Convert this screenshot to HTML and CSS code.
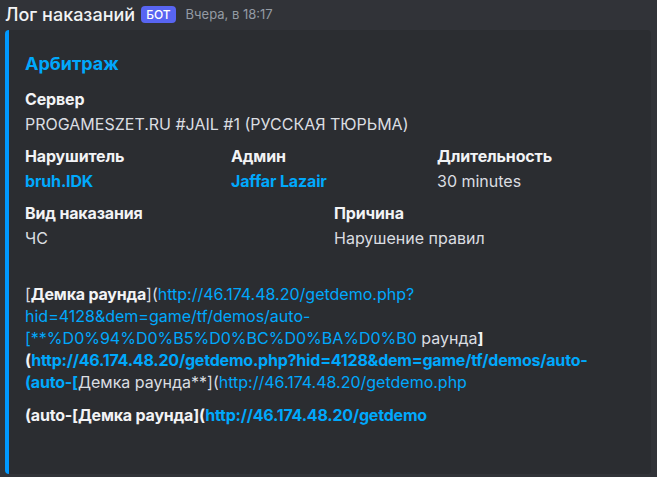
FILE: index.html
```html
<!DOCTYPE html>
<html lang="ru">
<head>
<meta charset="utf-8">
<title>Лог наказаний</title>
<link rel="stylesheet" href="styles.css">
</head>
<body>
<div class="message">
  <div class="header">
    <span class="username">Лог наказаний</span>
    <span class="bot-tag">БОТ</span>
    <span class="timestamp">Вчера, в 18:17</span>
  </div>
  <div class="embed">
    <div class="embed-title">Арбитраж</div>
    <div class="fields">
      <div class="field full">
        <div class="field-name">Сервер</div>
        <div class="field-value">PROGAMESZET.RU #JAIL #1 (РУССКАЯ ТЮРЬМА)</div>
      </div>
      <div class="field third">
        <div class="field-name">Нарушитель</div>
        <div class="field-value link bold">bruh.IDK</div>
      </div>
      <div class="field third">
        <div class="field-name">Админ</div>
        <div class="field-value link bold">Jaffar Lazair</div>
      </div>
      <div class="field third">
        <div class="field-name">Длительность</div>
        <div class="field-value">30 minutes</div>
      </div>
      <div class="field half">
        <div class="field-name">Вид наказания</div>
        <div class="field-value">ЧС</div>
      </div>
      <div class="field half">
        <div class="field-name">Причина</div>
        <div class="field-value">Нарушение правил</div>
      </div>
    </div>
    <div class="description">
      <p>[<b>Демка раунда</b>](<span class="link">http://46.174.48.20/getdemo.php?<br>hid=4128&amp;dem=game/tf/demos/auto-<br>[**%D0%94%D0%B5%D0%BC%D0%BA%D0%B0</span> раунда<b>]</b><br><b>(<span class="link">http://46.174.48.20/getdemo.php?hid=4128&amp;dem=game/tf/demos/auto-<br>(auto-[</span></b>Демка раунда**](<span class="link">http://46.174.48.20/getdemo.php</span></p>
      <p><b>(auto-[Демка раунда](<span class="link">http://46.174.48.20/getdemo</span></b></p>
    </div>
  </div>
</div>
</body>
</html>
```

FILE: styles.css
```css
html, body {
  margin: 0;
  padding: 0;
  background: #313338;
  font-family: Inter, "Noto Sans", sans-serif;
  color: #dbdee1;
}

.message {
  padding: 0 6px 0 5px;
}

.header {
  display: flex;
  align-items: center;
  height: 28px;
}

.username {
  color: #f2f3f5;
  font-size: 18px;
  font-weight: 500;
}

.bot-tag {
  background: #5865f2;
  color: #fff;
  font-size: 12px;
  font-weight: 500;
  border-radius: 4px;
  padding: 1px 5px;
  margin-left: 6px;
  line-height: 15px;
}

.timestamp {
  color: #949ba4;
  font-size: 13px;
  margin-left: 10px;
}

.embed {
  margin-top: 2px;
  background: #2b2d31;
  border-left: 4px solid #0099ff;
  border-radius: 4px;
  padding: 22px 16px 0 16px;
  height: 444px;
  box-sizing: border-box;
}

.embed-title {
  color: #00a8fc;
  font-size: 18px;
  font-weight: 700;
  line-height: 24px;
}

.fields {
  display: grid;
  grid-template-columns: repeat(6, 1fr);
  column-gap: 8px;
  row-gap: 10px;
  margin-top: 12px;
}

.field.full { grid-column: span 6; }
.field.third { grid-column: span 2; }
.field.half { grid-column: span 3; }

.field-name {
  color: #f2f3f5;
  font-size: 16px;
  font-weight: 700;
  line-height: 22px;
  margin-bottom: 3px;
  letter-spacing: -0.15px;
}

.field-value {
  font-size: 16px;
  line-height: 22px;
}

.link {
  color: #00a8fc;
}

.bold {
  font-weight: 700;
  letter-spacing: -0.15px;
}

.description {
  margin-top: 34px;
  font-size: 16px;
  line-height: 22px;
}

.description p {
  margin: 0 0 11px 0;
}

.description b {
  color: #f2f3f5;
  font-weight: 700;
  letter-spacing: -0.2px;
}

.description b .link {
  color: #00a8fc;
}
```
